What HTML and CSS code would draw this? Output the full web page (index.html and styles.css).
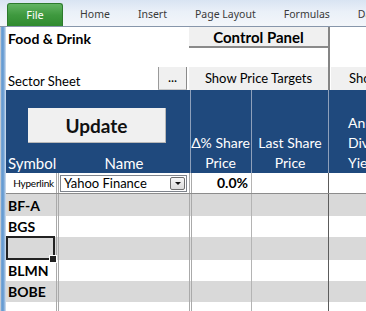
FILE: index.html
```html
<!DOCTYPE html>
<html>
<head>
<meta charset="utf-8">
<link rel="stylesheet" href="styles.css">
</head>
<body>
<div class="ribbon">
  <div class="tab file">File</div>
  <div class="tab">Home</div>
  <div class="tab">Insert</div>
  <div class="tab">Page Layout</div>
  <div class="tab">Formulas</div>
  <div class="tab">Data</div>
</div>
<div class="frame">
  <div class="stripe"></div>
  <div class="sheet">
    <div class="top">
      <div class="title">Food &amp; Drink</div>
      <div class="btn cp">Control Panel</div>
      <div class="sector">Sector Sheet</div>
      <div class="btn dots">...</div>
      <div class="btn spt">Show Price Targets</div>
      <div class="side"><div class="btn sho">Show Sector Data</div></div>
    </div>
    <div class="head">
      <div class="ab">
        <div class="update">Update</div>
        <div class="labels"><span class="sym">Symbol</span><span class="nm">Name</span></div>
      </div>
      <div class="hc hcc">&Delta;% Share<br>Price</div>
      <div class="hc hcd">Last Share<br>Price</div>
      <div class="hc hce">Annual<br>Dividend<br>Yield</div>
    </div>
    <div class="row r4">
      <div class="ca hyper">Hyperlink</div>
      <div class="cb"><div class="combo"><span class="ctext">Yahoo Finance</span><span class="arrow"></span></div></div>
      <div class="cc pct">0.0%</div>
      <div class="cd"></div>
      <div class="ce"></div>
    </div>
    <div class="row gray h22"><div class="ca sy">BF-A</div><div class="cb"></div><div class="cc"></div><div class="cd"></div><div class="ce"></div></div>
    <div class="row h21"><div class="ca sy">BGS</div><div class="cb"></div><div class="cc"></div><div class="cd"></div><div class="ce"></div></div>
    <div class="row gray h23"><div class="ca sy sel"></div><div class="cb"></div><div class="cc"></div><div class="cd"></div><div class="ce"></div></div>
    <div class="row h21"><div class="ca sy">BLMN</div><div class="cb"></div><div class="cc"></div><div class="cd"></div><div class="ce"></div></div>
    <div class="row gray h21"><div class="ca sy">BOBE</div><div class="cb"></div><div class="cc"></div><div class="cd"></div><div class="ce"></div></div>
    <div class="row h22"><div class="ca sy"></div><div class="cb"></div><div class="cc"></div><div class="cd"></div><div class="ce"></div></div>
  </div>
</div>
</body>
</html>
```

FILE: styles.css
```css
* { box-sizing: border-box; margin: 0; padding: 0; }
html, body { width: 366px; height: 311px; overflow: hidden; }
body { font-family: Lato, "Liberation Sans", sans-serif; background: #fff; color: #000; }

.ribbon {
  height: 27px;
  background: linear-gradient(#d9e4f2, #eaf0f8 45%, #f3f6fa);
  border-bottom: 1px solid #8796ab;
  display: flex;
  align-items: flex-end;
  padding-left: 7px;
  font-family: "Noto Sans", "Open Sans", sans-serif;
  font-size: 10.5px;
  color: #3a3a3a;
  white-space: nowrap;
  overflow: hidden;
}
.tab { flex: none; height: 23px; line-height: 22px; margin-right: 28px; }
.tab.file {
  width: 56px;
  text-align: center;
  color: #fff;
  font-size: 11px;
  background: linear-gradient(#62b462, #3f993f 50%, #2f8b2f);
  border: 1px solid #2c7a2c;
  border-bottom: none;
  border-radius: 3px 3px 0 0;
  margin-right: 17px;
}

.frame { display: flex; height: 284px; }
.stripe {
  width: 6px;
  flex: none;
  background: linear-gradient(to right, #c3cad3 0, #c3cad3 1px, #7eaad8 1px, #5f97d0 3px, #a6c2e2 5px, #dde6f1 6px);
}
.sheet { flex: 1; overflow: hidden; background: #fff; }

.top {
  display: grid;
  grid-template-columns: 152px 31px 139px 1fr;
  grid-template-rows: 21px 19px 23px;
  font-size: 13px;
  white-space: nowrap;
}
.title { grid-column: 1 / 3; grid-row: 1; align-self: end; padding-left: 2px; font-weight: bold; font-size: 14px; line-height: 18px; }
.btn { background: #f0f0f0; text-align: center; overflow: hidden; }
.cp { grid-column: 3; grid-row: 1; font-weight: bold; font-size: 15px; line-height: 19px; padding-top: 1px; border-bottom: 2px solid #8a8a8a; }
.sector { grid-column: 1; grid-row: 3; align-self: end; padding-left: 2px; line-height: 18px; }
.dots { grid-column: 2; grid-row: 3; margin-right: 2px; line-height: 21px; border-left: 1px solid #9a9a9a; border-right: 1px solid #8a8a8a; border-bottom: 1px solid #c8c8c8; }
.spt { grid-column: 3; grid-row: 3; line-height: 23px; }
.side { grid-column: 4; grid-row: 1 / 4; border-left: 2px solid #858585; display: flex; flex-direction: column; justify-content: flex-end; overflow: hidden; }
.sho { flex: none; height: 23px; line-height: 23px; margin-left: 1px; width: 138px; text-align: left; padding-left: 18px; }

.head {
  display: grid;
  grid-template-columns: 53px 130px 62px 77px 1fr;
  height: 83px;
  background: #1f497d;
  color: #fff;
  font-size: 14px;
  white-space: nowrap;
}
.ab { grid-column: 1 / 3; display: flex; flex-direction: column; }
.update {
  margin: 18px 0 0 22px;
  width: 138px;
  height: 35px;
  background: #f0f0f0;
  color: #111;
  font-weight: bold;
  font-size: 19px;
  display: flex;
  align-items: center;
  justify-content: center;
  border-right: 1px solid #b8b8b8;
  border-bottom: 1px solid #b8b8b8;
}
.labels { margin-top: auto; display: grid; grid-template-columns: 53px 130px; line-height: 20px; font-size: 15px; }
.sym { padding-left: 2px; }
.nm { text-align: center; }
.hc { display: flex; flex-direction: column; justify-content: flex-end; text-align: center; line-height: 20px; overflow: hidden; }
.hcc { box-shadow: inset 1px 0 0 #1f497d, inset 2px 0 0 #8ea0bb; padding-left: 1px; }
.hcd { border-left: 1px solid #8ea0bb; }
.hce { border-left: 1px solid #8ea0bb; text-align: left; padding-left: 19px; }

.row { display: grid; grid-template-columns: 53px 130px 62px 77px 1fr; }
.ca { border-right: 3px double #aaaaaa; }
.cc { border-left: 3px double #aaaaaa; }
.cd { border-left: 1px solid #b4b4b4; }
.ce { border-left: 1px solid #5c5c5c; }
.r4 { height: 21px; border-bottom: 1px solid #8c8c8c; }
.hyper { font-size: 10px; text-align: right; padding-right: 2px; line-height: 20px; letter-spacing: -0.2px; }
.cb { min-width: 0; }
.combo {
  margin: 2px 0 0 1px;
  width: 127px;
  height: 17px;
  border: 1px solid #7f848c;
  background: #fff;
  display: flex;
  align-items: center;
  font-size: 13px;
}
.ctext { flex: 1; padding-left: 3px; line-height: 15px; }
.arrow {
  width: 15px;
  height: 13px;
  margin-right: 1px;
  border: 1px solid #6f6f6f;
  border-radius: 2px;
  background: linear-gradient(#f7f7f7, #dcdcdc);
  display: flex;
  align-items: center;
  justify-content: center;
}
.arrow::after {
  content: "";
  border-left: 3px solid transparent;
  border-right: 3px solid transparent;
  border-top: 3px solid #111;
}
.pct { font-weight: bold; font-size: 14px; text-align: right; padding-right: 3px; line-height: 20px; }

.gray { background: #d9d9d9; }
.h21 { height: 21px; }
.h22 { height: 22px; }
.h23 { height: 23px; }
.sy { font-weight: bold; font-size: 14px; padding-left: 2px; display: flex; align-items: center; }
.sel { position: relative; }
.sel::before {
  content: "";
  position: absolute;
  left: 0;
  top: -1px;
  right: 1px;
  bottom: 0;
  border: 2px solid #222;
}
.sel::after {
  content: "";
  position: absolute;
  right: -1px;
  bottom: -3px;
  width: 6px;
  height: 6px;
  background: #222;
  border: 1px solid #fff;
}
```
